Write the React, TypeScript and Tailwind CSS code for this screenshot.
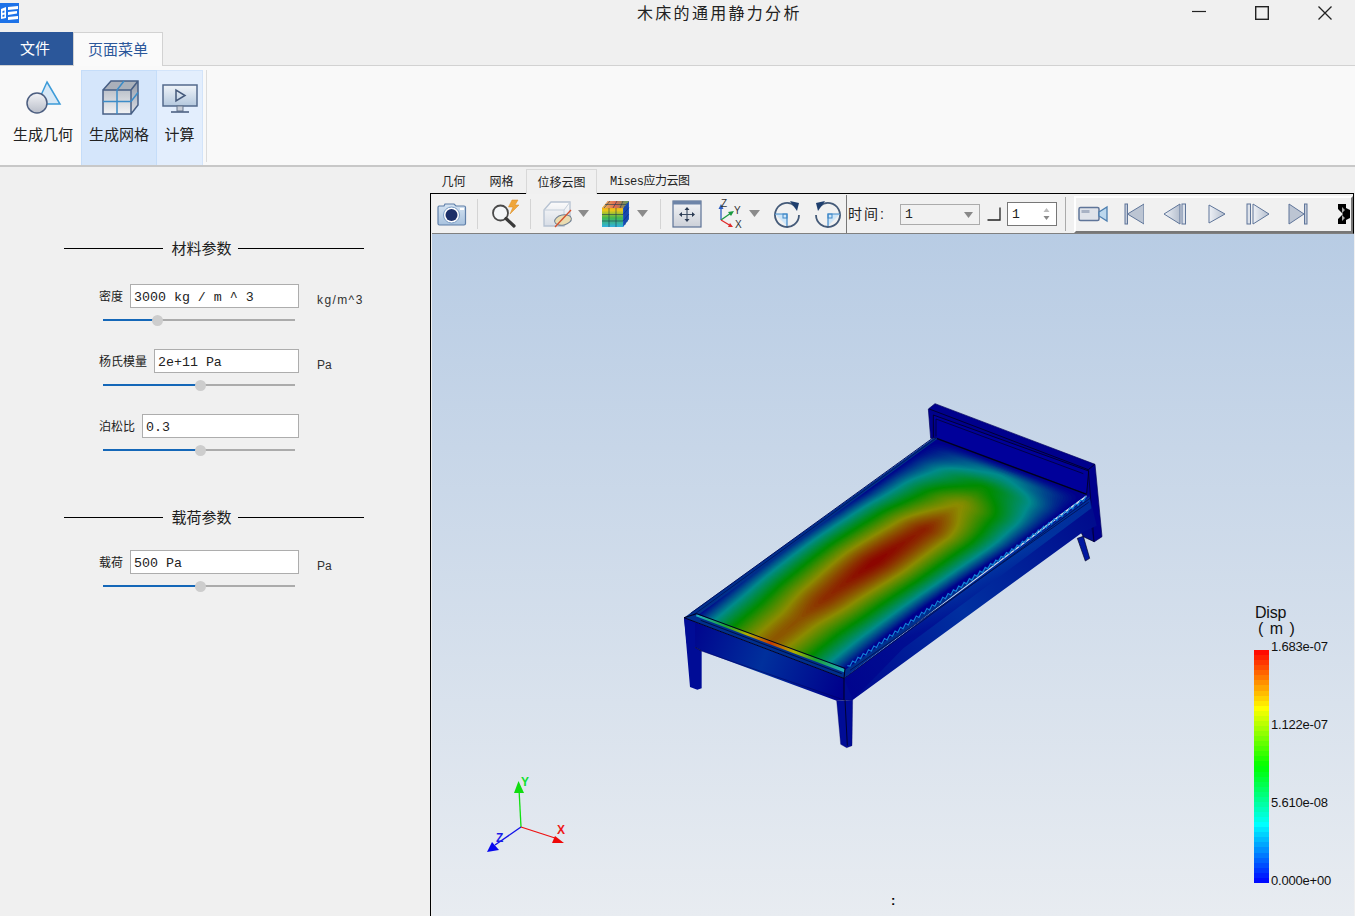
import React, { useMemo } from "react";

const CJK = "[font-family:'Liberation_Sans','Noto_Sans_CJK_SC',sans-serif]";

function jet(f: number, dark: number): [number, number, number] {
  const stops: [number, number, number][] = [
    [0, 0, 255],
    [0, 255, 255],
    [0, 255, 0],
    [255, 255, 0],
    [255, 0, 0],
  ];
  const t = Math.max(0, Math.min(0.9999, f)) * 4;
  const i = Math.floor(t);
  const k = t - i;
  const a = stops[i];
  const b = stops[i + 1];
  return [
    (a[0] + (b[0] - a[0]) * k) * dark,
    (a[1] + (b[1] - a[1]) * k) * dark,
    (a[2] + (b[2] - a[2]) * k) * dark,
  ];
}

function interp(x: number, pts: [number, number][]) {
  for (let i = 0; i < pts.length - 1; i++) {
    if (x <= pts[i + 1][0]) {
      const k = (x - pts[i][0]) / (pts[i + 1][0] - pts[i][0]);
      const s = k * k * (3 - 2 * k);
      return pts[i][1] + (pts[i + 1][1] - pts[i][1]) * (0.5 * k + 0.5 * s);
    }
  }
  return pts[pts.length - 1][1];
}

function Heat() {
  const bands = useMemo(() => {
    const fl = [80, 660];
    const fr = [525, 825];
    const hr = [1250, 300];
    const hl = [800, 130];
    const P = (u: number, v: number) => {
      const x = (1 - v) * ((1 - u) * fl[0] + u * fr[0]) + v * ((1 - u) * hl[0] + u * hr[0]);
      const y = (1 - v) * ((1 - u) * fl[1] + u * fr[1]) + v * ((1 - u) * hl[1] + u * hr[1]);
      return `${x.toFixed(1)} ${y.toFixed(1)}`;
    };
    const g: [number, number][] = [
      [0, 0.85], [0.12, 0.86], [0.25, 0.93], [0.45, 1.0], [0.64, 0.95], [0.78, 0.76], [0.88, 0.52], [0.95, 0.26], [1, 0],
    ];
    const uc = (v: number) => (v < 0.7 ? 0.5 - 0.03 * Math.sin((Math.PI * v) / 0.7) : 0.5);
    const out: [string, string][] = [];
    const LEVELS = 90;
    const SAMPLES = 220;
    for (let L = 0; L <= LEVELS; L++) {
      const t = L / LEVELS;
      let d = "";
      let left: string[] = [];
      let right: string[] = [];
      const flush = () => {
        if (left.length > 1) d += `M${left.join("L")}L${right.reverse().join("L")}Z`;
        left = [];
        right = [];
      };
      for (let s = 0; s <= SAMPLES; s++) {
        const v = s / SAMPLES;
        const gv = interp(v, g);
        if (L > 0 && gv <= t) {
          flush();
          continue;
        }
        const x = L === 0 ? 1 : Math.pow(1 - t / gv, 1 / 1.4);
        const c = L === 0 ? 0.5 : uc(v);
        left.push(P(Math.max(0, c - x / 2), v));
        right.push(P(Math.min(1, c + x / 2), v));
      }
      flush();
      if (d) {
        const col = jet(t, 0.55);
        out.push([`rgb(${col[0] | 0},${col[1] | 0},${col[2] | 0})`, d]);
      }
    }
    return out;
  }, []);
  return (
    <g>
      {bands.map(([c, d], i) => (
        <path key={i} d={d} fill={c} />
      ))}
    </g>
  );
}

function Bed() {
  const serr = useMemo(() => {
    let d = "M532 812";
    const n = 90;
    for (let i = 1; i <= n; i++) {
      const x = 532 + (716 * i) / n;
      const y = 812 - (505 * i) / n;
      d += `L${x.toFixed(1)} ${(y + (i % 2 ? 7 : -3)).toFixed(1)}`;
    }
    return d;
  }, []);
  const L = "#000020";
  return (
    <svg width="440" height="360" viewBox="0 0 1320 1080">
      <defs>
        <linearGradient id="footRail" x1="42" y1="700" x2="522" y2="880" gradientUnits="userSpaceOnUse">
          <stop offset="0" stopColor="#00008c" />
          <stop offset="0.5" stopColor="#00309c" />
          <stop offset="1" stopColor="#00008c" />
        </linearGradient>
        <linearGradient id="sideRail" x1="522" y1="850" x2="1270" y2="330" gradientUnits="userSpaceOnUse">
          <stop offset="0" stopColor="#000a90" />
          <stop offset="0.45" stopColor="#0030a0" />
          <stop offset="1" stopColor="#000a8c" />
        </linearGradient>
        <linearGradient id="sideFade" x1="760" y1="600" x2="800" y2="690" gradientUnits="userSpaceOnUse">
          <stop offset="0" stopColor="#0048a8" />
          <stop offset="1" stopColor="#00008c" />
        </linearGradient>
        <linearGradient id="strip" x1="80" y1="660" x2="525" y2="825" gradientUnits="userSpaceOnUse">
          <stop offset="0" stopColor="#20b0c0" />
          <stop offset="0.2" stopColor="#20a030" />
          <stop offset="0.34" stopColor="#b0b000" />
          <stop offset="0.5" stopColor="#c83a00" />
          <stop offset="0.66" stopColor="#b0b000" />
          <stop offset="0.8" stopColor="#20a030" />
          <stop offset="1" stopColor="#20b0c0" />
        </linearGradient>
      </defs>

      {/* rear right leg */}
      <polygon points="1222,430 1240,424 1259,490 1246,498" fill="#0018a0" stroke={L} strokeWidth="2" />
      <polygon points="1232,410 1270,392 1272,440 1240,425" fill="#000a8c" stroke={L} strokeWidth="2" />

      {/* headboard */}
      <polygon points="775,42 795,26 1275,208 1296,425 1272,441 1250,300 800,130 782,130" fill="#00008c" stroke="#00005a" strokeWidth="2" />
      <polygon points="790,60 1256,228 1250,298 800,130" fill="#00009a" />
      <polyline points="778,42 1255,224 1274,208" fill="none" stroke={L} strokeWidth="2.5" />
      <polyline points="790,130 790,60 1256,228 1250,296" fill="none" stroke={L} strokeWidth="2.5" />
      <polyline points="798,124 798,72 1240,236" fill="none" stroke={L} strokeWidth="2" />
      <line x1="1255" y1="224" x2="1272" y2="440" stroke={L} strokeWidth="2" />

      {/* frame */}
      <polygon points="42,668 790,130 1250,298 522,850" fill="#002f8e" />
      <polygon points="522,850 1258,300 1280,392 1240,410 548,915 522,915" fill="url(#sideRail)" />
      <polygon points="522,850 1258,305 1264,340 700,760 548,915" fill="url(#sideFade)" opacity="0.55" />
      <polygon points="42,668 522,850 522,915 500,917 95,768 75,757 50,745" fill="url(#footRail)" />

      {/* legs */}
      <polygon points="42,668 75,680 75,757 95,768 95,880 82,884 60,876" fill="#000c96" />
      <polygon points="500,917 548,915 546,1052 530,1058 512,1048" fill="#000c96" stroke="#00005a" strokeWidth="1" />
      <line x1="525" y1="915" x2="532" y2="1052" stroke={L} strokeWidth="2.5" />
      <line x1="75" y1="757" x2="95" y2="768" stroke={L} strokeWidth="2" />

      {/* mattress */}
      <Heat />

      {/* edges */}
      <polyline points="62,655 790,128 1252,298" fill="none" stroke="#001060" strokeWidth="3" />
      <polyline points="800,130 1250,298" fill="none" stroke={L} strokeWidth="4" />
      <polyline points="80,660 800,130" fill="none" stroke="#00308a" strokeWidth="5" />
      <polyline points="70,660 800,128" fill="none" stroke="#001050" strokeWidth="2" />
      <path d={serr} fill="none" stroke="#1080d8" strokeWidth="3.5" />
      <line x1="540" y1="826" x2="1256" y2="322" stroke="#001050" strokeWidth="2.5" />
      <line x1="522" y1="850" x2="1260" y2="310" stroke="#001050" strokeWidth="2.5" />
      <polygon points="80,658 525,822 522,832 78,664" fill="url(#strip)" />
      <polyline points="42,668 80,656 525,820 522,850 42,668" fill="none" stroke={L} strokeWidth="3" />
      <line x1="92" y1="676" x2="515" y2="836" stroke={L} strokeWidth="2" />
      <line x1="522" y1="850" x2="522" y2="915" stroke={L} strokeWidth="3" />
      <line x1="522" y1="915" x2="95" y2="768" stroke="#00005a" strokeWidth="1.5" />
    </svg>
  );
}

function Triangle() {
  return (
    <svg width="11" height="7" viewBox="0 0 11 7" className="shrink-0">
      <polygon points="0,0 11,0 5.5,7" fill="#8b8b8b" />
    </svg>
  );
}

function Sep({ className }: { className: string }) {
  return <div className={`w-px h-[30px] bg-[#d4d4d4] shrink-0 ${className}`} />;
}

function CameraIcon() {
  return (
    <svg width="30" height="26" viewBox="0 0 30 26" className="shrink-0 ml-[5px]">
      <defs>
        <linearGradient id="cam" x1="0" y1="0" x2="0" y2="1">
          <stop offset="0" stopColor="#d6e4f2" />
          <stop offset="1" stopColor="#a8c2de" />
        </linearGradient>
      </defs>
      <path d="M2 5h5l1-2h9l2 2h8a1.500 1.500 0 0 1 1.500 1.500v16a1.500 1.500 0 0 1-1.500 1.500H2.500A1.500 1.500 0 0 1 1 22.500V6.500A1.500 1.500 0 0 1 2 5z" fill="url(#cam)" stroke="#5f7fa8" strokeWidth="1.200" />
      <circle cx="14.500" cy="14" r="8" fill="#ffffff" stroke="#7a9cc4" />
      <circle cx="14.500" cy="14" r="6" fill="#1c2f68" />
      <rect x="23" y="7" width="4" height="2" fill="#fff" />
    </svg>
  );
}

function MagnifierIcon() {
  return (
    <svg width="30" height="30" viewBox="0 0 30 30" className="shrink-0 ml-3">
      <circle cx="10.500" cy="14" r="7.500" fill="#f4f6f8" stroke="#4a4a4a" strokeWidth="1.800" />
      <line x1="16" y1="19.500" x2="24" y2="27" stroke="#3a3a3a" strokeWidth="3.200" strokeLinecap="round" />
      <polygon points="22,1 28,1 25,6 29,6 20,15 23,8 18.500,8" fill="#f0a63a" stroke="#d88a20" strokeWidth="0.500" />
    </svg>
  );
}

function BoxIcon() {
  return (
    <svg width="30" height="30" viewBox="0 0 30 30" className="shrink-0 ml-3">
      <defs>
        <linearGradient id="bx" x1="0" y1="0" x2="0" y2="1">
          <stop offset="0" stopColor="#fbfbfb" />
          <stop offset="1" stopColor="#d7dde6" />
        </linearGradient>
      </defs>
      <polygon points="1,11 8,3 27,3 27,19 21,27 1,27" fill="url(#bx)" stroke="#b6c2d2" strokeWidth="1.300" />
      <polyline points="1,11 21,11 27,3" fill="none" stroke="#c4ceda" />
      <line x1="21" y1="11" x2="21" y2="27" stroke="#c4ceda" />
      <ellipse cx="20" cy="21" rx="8.500" ry="5" transform="rotate(-12 20 21)" fill="#eadcb0" stroke="#6f7f92" strokeWidth="1" />
      <line x1="12" y1="28" x2="28" y2="11" stroke="#d4502c" strokeWidth="1.300" />
    </svg>
  );
}

function ColorCubeIcon() {
  return (
    <svg width="30" height="30" viewBox="0 0 30 30" className="shrink-0 ml-3">
      <defs>
        <linearGradient id="cc" x1="0" y1="0" x2="0" y2="1">
          <stop offset="0" stopColor="#e84030" />
          <stop offset="0.35" stopColor="#f0c818" />
          <stop offset="0.65" stopColor="#40b850" />
          <stop offset="1" stopColor="#30b0e0" />
        </linearGradient>
        <linearGradient id="cct" x1="0" y1="0" x2="1" y2="0">
          <stop offset="0" stopColor="#e8c060" />
          <stop offset="0.5" stopColor="#e06850" />
          <stop offset="1" stopColor="#50a060" />
        </linearGradient>
      </defs>
      <polygon points="1,9 7,2 28,2 28,20 22,28 1,28" fill="url(#cc)" />
      <polygon points="22,9 28,2 28,20 22,28" fill="#1f58c0" />
      <polygon points="1,9 7,2 28,2 22,9" fill="url(#cct)" />
      <path d="M8 9v19M15 9v19M1 15.500h21M1 22h21M9 2l-6 7M16 2l-4 7M22 2l-3 7M4 5.500h21" stroke="#1c3a50" strokeWidth="0.600" fill="none" />
      <path d="M24 7v19M26 4v19M22 15.500l6-7M22 22l6-7" stroke="#0a2a80" strokeWidth="0.600" fill="none" />
    </svg>
  );
}

function FitIcon() {
  return (
    <svg width="30" height="28" viewBox="0 0 30 28" className="shrink-0 ml-[11px]">
      <defs>
        <linearGradient id="ft" x1="0" y1="0" x2="0" y2="1">
          <stop offset="0" stopColor="#f5f6f8" />
          <stop offset="1" stopColor="#ccd0d8" />
        </linearGradient>
      </defs>
      <rect x="1" y="1" width="28" height="26" fill="url(#ft)" stroke="#5c7296" strokeWidth="1.200" />
      <rect x="1" y="1" width="28" height="3.500" fill="#6d84a8" />
      <path d="M15 9v11M9 14.500h12" stroke="#3a4a60" strokeWidth="1.100" />
      <path d="M15 7l-2.500 3h5zM15 22l-2.500-3h5zM7 14.500l3-2.500v5zM23 14.500l-3-2.500v5z" fill="#2a3a52" />
    </svg>
  );
}

function AxesIcon() {
  return (
    <svg width="30" height="30" viewBox="0 0 30 30" className="shrink-0 ml-3.5">
      <line x1="5" y1="21" x2="5" y2="8" stroke="#2a5cc0" strokeWidth="1.300" />
      <polygon points="5,5 2.500,10 7.500,10" fill="#2a5cc0" />
      <line x1="5" y1="21" x2="15" y2="14" stroke="#1a9a40" strokeWidth="1.300" />
      <polygon points="18,12 12,13 15,17" fill="#1a9a40" />
      <line x1="5" y1="21" x2="15" y2="27" stroke="#e02a2a" strokeWidth="1.300" />
      <polygon points="17,28 12,28 14,24" fill="#e02a2a" />
      <text x="5" y="8" fontSize="10" fontFamily="Liberation Sans" fill="#333">Z</text>
      <text x="18" y="15" fontSize="10" fontFamily="Liberation Sans" fill="#333">Y</text>
      <text x="19" y="29" fontSize="10" fontFamily="Liberation Sans" fill="#333">X</text>
    </svg>
  );
}

function RotCw() {
  return (
    <svg width="28" height="28" viewBox="0 0 28 28" className="shrink-0 ml-[13px]">
      <path d="M22 6A12 12 0 1 0 26 15" fill="none" stroke="#445a78" strokeWidth="1.800" />
      <polygon points="17,1 26,3 24,11" fill="#1f3f6e" />
      <path d="M2 14h12v12" fill="#cfe6f8" stroke="#3f88c8" strokeWidth="1.200" />
      <rect x="10" y="14" width="4" height="4" fill="none" stroke="#3f88c8" />
    </svg>
  );
}

function RotCcw() {
  return (
    <svg width="28" height="28" viewBox="0 0 28 28" className="shrink-0 ml-[13px]">
      <path d="M6 6A12 12 0 1 1 2 15" fill="none" stroke="#445a78" strokeWidth="1.800" />
      <polygon points="11,1 2,3 4,11" fill="#1f3f6e" />
      <path d="M26 14H14v12" fill="#cfe6f8" stroke="#3f88c8" strokeWidth="1.200" />
      <rect x="14" y="14" width="4" height="4" fill="none" stroke="#3f88c8" />
    </svg>
  );
}

function Defs() {
  return (
    <svg width="0" height="0" className="absolute">
      <defs>
        <linearGradient id="pl" x1="0" y1="0" x2="1" y2="0">
          <stop offset="0" stopColor="#eef1f6" />
          <stop offset="1" stopColor="#b4bece" />
        </linearGradient>
      </defs>
    </svg>
  );
}

const S = "#5f7599";

function VideoIcon() {
  return (
    <svg width="30" height="18" viewBox="0 0 30 18" className="shrink-0 ml-[2px]">
      <rect x="1" y="2.500" width="20" height="13" rx="1.500" fill="#dfe3ea" stroke={S} strokeWidth="1.500" />
      <rect x="3.500" y="5" width="8" height="3" fill="#a8b2c4" />
      <polygon points="21,7 29,2 29,16 21,11" fill="#bcd8ee" stroke="#4d7fb0" strokeWidth="1.300" />
    </svg>
  );
}

function FirstIcon() {
  return (
    <svg width="20" height="22" viewBox="0 0 20 22" className="shrink-0 ml-4">
      <rect x="1" y="1" width="2.500" height="20" fill="#c4ccda" stroke={S} />
      <polygon points="3.500,11 20,1 20,21" fill="#bcc5d3" stroke={S} />
    </svg>
  );
}
function PrevIcon() {
  return (
    <svg width="24" height="22" viewBox="0 0 24 22" className="shrink-0 ml-[19px]">
      <polygon points="1,11 17,1 17,21" fill="url(#pl)" stroke={S} />
      <rect x="19" y="1" width="3.500" height="20" fill="#dde2ea" stroke={S} />
    </svg>
  );
}
function PlayIcon() {
  return (
    <svg width="20" height="22" viewBox="0 0 20 22" className="shrink-0 ml-5">
      <polygon points="2,2 18,11 2,20" fill="url(#pl)" stroke={S} />
    </svg>
  );
}
function NextIcon() {
  return (
    <svg width="24" height="22" viewBox="0 0 24 22" className="shrink-0 ml-[19px]">
      <rect x="1" y="1" width="3.500" height="20" fill="#dde2ea" stroke={S} />
      <polygon points="7,1 23,11 7,21" fill="url(#pl)" stroke={S} />
    </svg>
  );
}
function LastIcon() {
  return (
    <svg width="20" height="22" viewBox="0 0 20 22" className="shrink-0 ml-[18px]">
      <polygon points="1,1 16,11 1,21" fill="#bcc5d3" stroke={S} />
      <rect x="16.500" y="1" width="2.500" height="20" fill="#c4ccda" stroke={S} />
    </svg>
  );
}
function ClippedIcon() {
  return (
    <svg width="12" height="20" viewBox="0 0 12 20" className="shrink-0 ml-[30px]">
      <path d="M0 0h8v4L12 6v8L8 16v4H0v-5l5-5L0 5z" fill="#000" />
      <path d="M4 3l3 3-3 3zM4 11l3 3-3 3z" fill="#aaa" />
    </svg>
  );
}

function Field({ label, value, unit, pos, wide, unitCls }: { label: string; value: string; unit: string; pos: string; wide: string; unitCls?: string }) {
  return (
    <div>
      <div className="flex items-center h-6">
        <span className="ml-[35px] pt-[2px] text-[12px] text-[#202020] whitespace-nowrap w-auto leading-none">{label}</span>
        <div className={`ml-auto h-6 box-border border border-[#adadad] bg-white flex items-center pl-[3px] pt-[3px] [font-family:'Liberation_Mono','Noto_Sans_CJK_SC',monospace] text-[13.300px] text-[#222] whitespace-pre leading-none ${wide}`}>
          {value}
        </div>
        <span className={`w-[65px] pl-[18px] text-[12px] text-[#303030] pt-[8px] shrink-0 whitespace-nowrap ${unitCls || ""}`}>{unit}</span>
      </div>
      <div className="h-3 mt-1.5 ml-[39px] w-[192px] relative flex items-center">
        <div className={`h-[2px] bg-[#1467b8] ${pos === "a" ? "w-[54px]" : "w-[97px]"}`} />
        <div className={`w-[11px] h-[11px] rounded-full bg-[#cdcdcd] -mx-[5px] z-10 shrink-0`} />
        <div className="h-[2px] bg-[#ababab] flex-1" />
      </div>
    </div>
  );
}

function Heading({ text, className }: { text: string; className: string }) {
  return (
    <div className={`flex items-center h-5 w-[300px] ${className}`}>
      <div className="w-[99px] h-px bg-black" />
      <span className="w-[75px] pl-[2px] text-center text-[15px] text-[#202020] leading-none whitespace-nowrap">{text}</span>
      <div className="flex-1 h-px bg-black" />
    </div>
  );
}

function Legend() {
  const n = 46;
  const bands = Array.from({ length: n }, (_, i) => {
    const f = 1 - (i + 0.5) / n;
    const c = jet(f, 1);
    return `rgb(${c[0] | 0},${c[1] | 0},${c[2] | 0})`;
  });
  return (
    <div className="absolute left-[822px] top-[371px] w-[100px] h-[290px] text-[#111]">
      <div className="text-[16px] leading-4 tracking-[-0.2px] ml-px">Disp</div>
      <div className="text-[16px] leading-4 ml-[4px] whitespace-pre tracking-[1px]">( m )</div>
      <div className="flex mt-[13px]">
        <div className="w-[15px] h-[233px] flex flex-col">
          {bands.map((c, i) => (
            <div key={i} className="flex-1" style={{ background: c }} />
          ))}
        </div>
        <div className="relative flex flex-col justify-between h-[250px] -mt-[11px] ml-[2px] text-[13px] leading-4 tracking-[-0.2px] whitespace-nowrap">
          <span>1.683e-07</span>
          <span>1.122e-07</span>
          <span>5.610e-08</span>
          <span>0.000e+00</span>
        </div>
      </div>
    </div>
  );
}

function Triad() {
  return (
    <svg width="110" height="95" viewBox="0 0 110 95" className="absolute left-[38px] top-[531px]">
      <line x1="51" y1="62" x2="49" y2="24" stroke="#10e010" strokeWidth="1.300" />
      <polygon points="48.500,16 44,28 54,28" fill="#10dd10" />
      <line x1="51" y1="62" x2="25" y2="80" stroke="#1010e8" strokeWidth="1.300" />
      <polygon points="17,87 22,77 29,85" fill="#0808ee" />
      <line x1="51" y1="62" x2="85" y2="73" stroke="#ee1010" strokeWidth="1.300" />
      <polygon points="94,78 82,78 85,71" fill="#ee0808" />
      <text x="51" y="21" fontSize="12" fontWeight="700" fontFamily="Liberation Sans" fill="#10e030">Y</text>
      <text x="26" y="77" fontSize="12" fontWeight="700" fontFamily="Liberation Sans" fill="#1a1ae8">Z</text>
      <text x="87" y="69" fontSize="12" fontWeight="700" fontFamily="Liberation Sans" fill="#ee1818">X</text>
    </svg>
  );
}

export default function App() {
  return (
    <div className={`w-[1355px] h-[916px] overflow-hidden bg-[#f0f0f0] flex flex-col ${CJK}`}>
      <Defs />
      {/* title bar */}
      <div className="h-8 flex items-center shrink-0 relative">
        <svg width="19" height="20" viewBox="0 0 19 20" className="-mt-[6px] shrink-0">
          <rect width="19" height="20" fill="#1d72e8" />
          <path d="M1 6l5-2v11l-5 1zM2.500 8v2l2-.5V7.500zM2.500 12v2l2-.5v-2zM8 4l10-1v3L8 7zM8 9l9-1v2.500L8 12zM8 14l10-1v3L8 17z" fill="#fff" />
        </svg>
        <div className="ml-[618px] w-[164px] text-[16px] tracking-[2.300px] text-[#222] whitespace-nowrap -mt-[5px] leading-5">木床的通用静力分析</div>
        <svg width="14" height="14" viewBox="0 0 14 14" className="ml-[391px] -mt-[6px] shrink-0">
          <line x1="0" y1="5.500" x2="14" y2="5.500" stroke="#222" strokeWidth="1.200" />
        </svg>
        <svg width="14" height="14" viewBox="0 0 14 14" className="ml-[49px] -mt-[6px] shrink-0">
          <rect x="0.700" y="0.700" width="12.600" height="12.600" fill="none" stroke="#222" strokeWidth="1.400" />
        </svg>
        <svg width="14" height="14" viewBox="0 0 14 14" className="ml-[49px] -mt-[6px] shrink-0">
          <path d="M0.500 0.500L13.500 13.500M13.500 0.500L0.500 13.500" stroke="#222" strokeWidth="1.300" />
        </svg>
      </div>

      {/* menu tabs */}
      <div className="h-[34px] flex shrink-0 border-b border-[#d2d2d2]">
        <div className="w-[73px] h-[33px] bg-[#2b579a] text-white text-[15px] flex items-center justify-center pr-[3px] pt-px">文件</div>
        <div className="w-[90px] h-[34px] bg-[#fafafa] border border-b-0 border-[#d2d2d2] text-[#2b579a] text-[15px] flex items-center justify-center z-10 pt-px">页面菜单</div>
      </div>

      {/* ribbon */}
      <div className="h-[99px] bg-[#f9f9f9] flex shrink-0 items-stretch pt-1">
        <div className="w-[81px] flex flex-col items-center">
          <svg width="36" height="36" viewBox="0 0 36 36" className="mt-[10px] ml-[6px]">
            <defs>
              <linearGradient id="circ" x1="0" y1="0" x2="0" y2="1">
                <stop offset="0" stopColor="#f2f3f6" />
                <stop offset="1" stopColor="#b9bec9" />
              </linearGradient>
            </defs>
            <polygon points="21,2 34,24 11,24" fill="#d7e8f6" stroke="#3c9bd8" strokeWidth="1.500" />
            <circle cx="11" cy="23" r="10" fill="url(#circ)" stroke="#4c5e80" strokeWidth="1.500" />
          </svg>
          <span className="text-[15px] text-[#222] leading-5 mt-[9px] ml-[5px] whitespace-nowrap">生成几何</span>
        </div>
        <div className="w-[76px] bg-[#d5e6fb] border border-[#c5ddf9] border-b-0 flex flex-col items-center">
          <svg width="38" height="38" viewBox="0 0 38 38" className="mt-[8px] ml-[3px]">
            <defs>
              <linearGradient id="cub" x1="0" y1="0" x2="0" y2="1">
                <stop offset="0" stopColor="#a8afba" />
                <stop offset="1" stopColor="#f2f3f5" />
              </linearGradient>
              <linearGradient id="cubs" x1="0" y1="0" x2="0" y2="1">
                <stop offset="0" stopColor="#8f97a6" />
                <stop offset="1" stopColor="#dfe2e8" />
              </linearGradient>
            </defs>
            <polygon points="1,11 9,2 36,2 36,26 29,35 1,35" fill="url(#cub)" />
            <polygon points="1,11 9,2 36,2 29,11" fill="#aab0ba" />
            <polygon points="29,11 36,2 36,26 29,35" fill="url(#cubs)" />
            <path d="M1 11h28V35H1zM1 11l8-9H36V26L29 35M29 11l7-9" fill="none" stroke="#475f85" strokeWidth="1.500" />
            <path d="M15 11V35M1 22.500h28M29 22.500l7-9M22 2l-7 9" fill="none" stroke="#3c8cc8" strokeWidth="1.500" />
          </svg>
          <span className="text-[15px] text-[#222] leading-5 mt-[8px] whitespace-nowrap">生成网格</span>
        </div>
        <div className="w-[46px] bg-[#e3eefd] border border-l-0 border-b-0 border-[#d3e4fa] flex flex-col items-center">
          <svg width="36" height="32" viewBox="0 0 36 32" className="mt-[13px]">
            <defs>
              <linearGradient id="scr" x1="0" y1="0" x2="0" y2="1">
                <stop offset="0" stopColor="#f0f4f9" />
                <stop offset="1" stopColor="#b4c8de" />
              </linearGradient>
            </defs>
            <rect x="1" y="1" width="34" height="21" fill="url(#scr)" stroke="#546a8c" strokeWidth="1.500" />
            <polygon points="14,6 14,17 23,11.500" fill="none" stroke="#44587a" strokeWidth="1.500" />
            <rect x="15" y="22" width="6" height="5" fill="#c9ced8" stroke="#66768e" />
            <line x1="9" y1="28" x2="27" y2="28" stroke="#44587a" strokeWidth="1.500" />
          </svg>
          <span className="text-[15px] text-[#222] leading-5 mt-[9px] whitespace-nowrap">计算</span>
        </div>
        <div className="w-px bg-[#dcdcdc] ml-[3px] mb-[3px]" />
      </div>
      <div className="h-[2px] bg-[#c8c8c8] shrink-0" />

      {/* body */}
      <div className="flex flex-1 min-h-0">
        {/* left panel */}
        <div className="w-[430px] shrink-0 pl-[64px] pt-[71px]">
          <Heading text="材料参数" className="" />
          <div className="w-[300px] mt-[26px] flex flex-col gap-[23px]">
            <Field label="密度" value="3000 kg / m ^ 3" unit="kg/m^3" pos="a" wide="w-[169px]" unitCls="tracking-[1.400px]" />
            <Field label="杨氏模量" value="2e+11 Pa" unit="Pa" pos="b" wide="w-[145px]" />
            <Field label="泊松比" value="0.3" unit="" pos="b" wide="w-[157px]" />
          </div>
          <Heading text="载荷参数" className="mt-[51px]" />
          <div className="w-[300px] mt-[23px]">
            <Field label="载荷" value="500 Pa" unit="Pa" pos="b" wide="w-[169px]" />
          </div>
        </div>

        {/* right panel */}
        <div className="flex-1 flex flex-col min-w-0 pr-[1px]">
          <div className="h-[26px] flex items-end shrink-0 text-[12px] text-[#222]">
            <div className="w-[47px] h-[24px] flex items-center justify-center pt-[2px]">几何</div>
            <div className="w-[49px] h-[24px] flex items-center justify-center pt-[2px]">网格</div>
            <div className="w-[71px] h-[25px] -mb-px z-10 bg-[#f0f0f0] border border-b-0 border-[#d8d8d8] flex items-center justify-center pt-[2px]">位移云图</div>
            <div className="ml-[3px] w-[100px] h-[24px] flex items-center [font-family:'Liberation_Mono','Noto_Sans_CJK_SC',monospace] whitespace-nowrap tracking-[-0.5px] pl-[10px] pt-[2px]">Mises应力云图</div>
          </div>
          <div className="flex-1 flex flex-col border-l border-t border-black min-h-0 relative pl-px bg-[#f0f0f0]">
            {/* toolbar */}
            <div className="h-[40px] flex items-center shrink-0 bg-[#f1f1f1] border-b border-[#808080] border-r border-r-black">
              <CameraIcon />
              <Sep className="ml-2.5" />
              <MagnifierIcon />
              <Sep className="ml-2.5" />
              <BoxIcon />
              <div className="ml-[5px]"><Triangle /></div>
              <ColorCubeIcon />
              <div className="ml-1.5"><Triangle /></div>
              <Sep className="ml-3" />
              <FitIcon />
              <AxesIcon />
              <div className="ml-[3px]"><Triangle /></div>
              <RotCw />
              <RotCcw />
              <div className="w-px h-[38px] bg-[#777] ml-1 shrink-0" />
              <div className="ml-px w-[37px] pt-px text-[14px] tracking-[2px] text-[#222] whitespace-nowrap">时间:</div>
              <div className="ml-[15px] mt-[2px] w-[80px] h-[21px] box-border border border-[#ababab] flex items-center justify-between px-1 text-[13px] text-[#222] shrink-0">
                <span className="[font-family:'Liberation_Mono',monospace]">1</span>
                <svg width="9" height="6" viewBox="0 0 9 6" className="mr-[2px]"><polygon points="0,0 9,0 4.500,6" fill="#888" /></svg>
              </div>
              <svg width="14" height="14" viewBox="0 0 14 14" className="ml-[7px] shrink-0">
                <path d="M0.500 13H13V0.500" fill="none" stroke="#222" strokeWidth="1.300" />
              </svg>
              <div className="ml-1.5 w-[50px] h-6 box-border border border-[#777] bg-white flex items-center justify-between pl-1 pr-[6px] text-[13px] text-[#222] shrink-0">
                <span className="[font-family:'Liberation_Mono',monospace] pt-[2px]">1</span>
                <svg width="7" height="14" viewBox="0 0 7 14"><polygon points="3.500,1 0.500,5 6.500,5" fill="#bbb" /><polygon points="3.500,13 0.500,9 6.500,9" fill="#888" /></svg>
              </div>
              <div className="w-px h-[34px] bg-[#aaa] ml-2 shrink-0" />
              <div className="ml-2 flex-1 min-w-0 h-[37px] mt-[1px] flex items-center border-t-2 border-l-2 border-white border-b-2 border-b-[#777] border-r-2 border-r-[#777] overflow-hidden">
                <VideoIcon />
                <FirstIcon />
                <PrevIcon />
                <PlayIcon />
                <NextIcon />
                <LastIcon />
                <ClippedIcon />
              </div>
            </div>

            {/* viewport */}
            <div className="relative flex-1 bg-[linear-gradient(to_bottom,#b8cce4,#e8ecf1)] overflow-hidden">
              <div className="absolute left-[238px] top-[161px]">
                <Bed />
              </div>
              <Legend />
              <Triad />
              <span className="absolute left-[459px] top-[659px] text-[13px] font-bold text-black leading-4">:</span>
            </div>
          </div>
        </div>
      </div>
    </div>
  );
}
